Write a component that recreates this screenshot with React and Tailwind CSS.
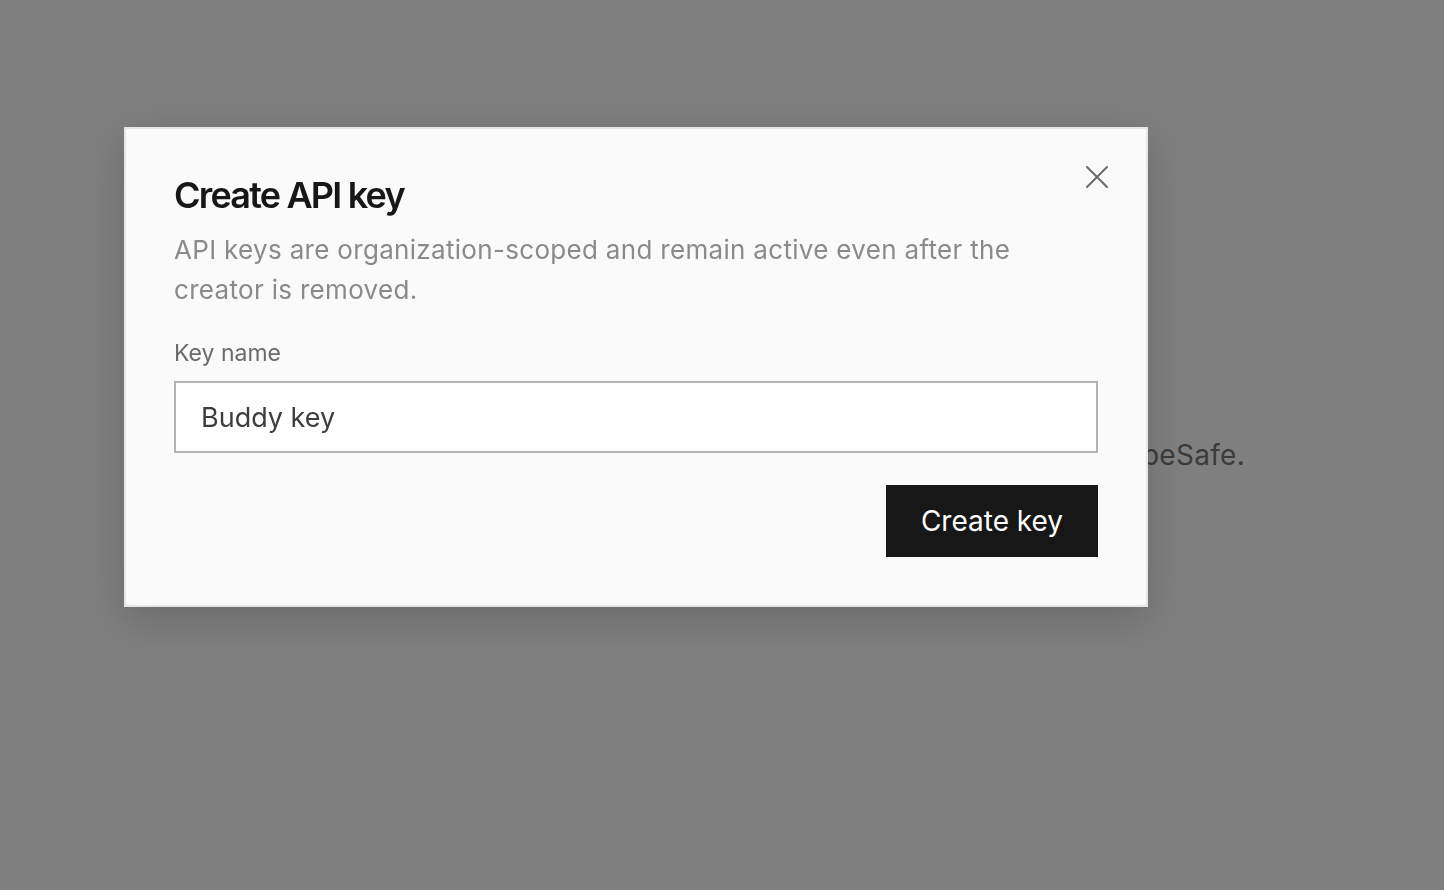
import { useState } from "react";

const CloseIcon = () => (
  <svg width="22" height="22" viewBox="0 0 22 22" fill="none" stroke="currentColor" strokeWidth="2" strokeLinecap="round">
    <path d="M1 1L21 21M21 1L1 21" />
  </svg>
);

const CreateKeyDialog = () => {
  const [name, setName] = useState("Buddy key");

  return (
    <div className="relative w-[1024px] border-2 border-[#e6e6e6] bg-[#fafafa] px-12 pt-[44px] pb-12 shadow-[0_12px_40px_rgba(0,0,0,0.18)]">
      <button className="absolute top-[37px] right-[38px] text-[#6b6b6b]" title="Close">
        <CloseIcon />
      </button>

      <h2 className="text-[36px] leading-[44px] font-semibold tracking-[-0.05em] text-[#171717]">Create API key</h2>
      <p className="mt-[13px] text-[26px] leading-[40px] tracking-[0.012em] text-[#8a8a8a]">
        API keys are organization-scoped and remain active even after the creator is removed.
      </p>

      <label className="mt-[27px] block text-[23px] leading-[32px] text-[#6b6b6b]">Key name</label>
      <input
        value={name}
        onChange={(e) => setName(e.target.value)}
        className="mt-3 block h-[72px] w-full border-2 border-[#b3b3b3] bg-white px-[25px] text-[27px] text-[#3d3d3d] outline-none"
      />

      <div className="mt-8 flex justify-end">
        <button className="h-[72px] w-[212px] bg-[#171717] text-[28px] text-white">Create key</button>
      </div>
    </div>
  );
};

export default function App() {
  return (
    <div className="relative min-h-screen bg-white font-['Inter',sans-serif]">
      <div className="w-[1245px] pt-[434px] text-right text-[28px] tracking-[0.01em] text-[#777777]">
        Use these keys to authenticate requests to TypeSafe.
      </div>

      <div className="fixed inset-0 bg-black/50 pt-[127px] pl-[124px]">
        <CreateKeyDialog />
      </div>
    </div>
  );
}
